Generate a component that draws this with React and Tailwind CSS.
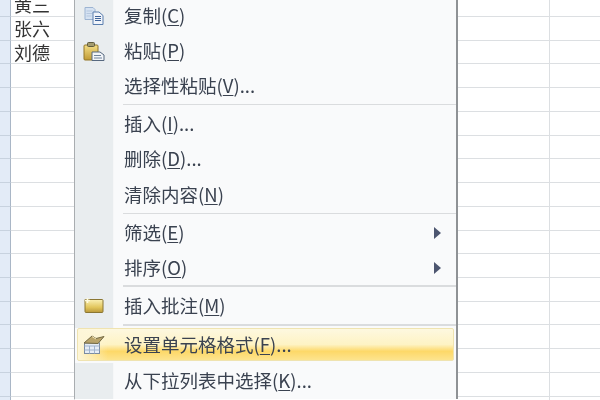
const font = { fontFamily: '"Noto Sans CJK SC", "Liberation Sans", sans-serif' };

function CopyIcon() {
  return (
    <svg width="20" height="18" viewBox="0 0 20 18">
      <path d="M1 .5h8l2 2v10H1z" fill="#d5e2f2" stroke="#9db4d2" />
      <path d="M2.500 4h6M2.500 6.500h6M2.500 9h5" stroke="#b5c7de" />
      <path d="M9 5h6l4 3.500v9H9z" fill="#f0f4fa" stroke="#5a7eae" />
      <path d="M11 9.500h6M11 11.500h6M11 13.500h6" stroke="#3f6399" strokeWidth="1.2" />
    </svg>
  );
}

function PasteIcon() {
  return (
    <svg width="22" height="19" viewBox="0 0 22 19">
      <defs>
        <linearGradient id="board" x1="0" y1="0" x2="0" y2="1">
          <stop offset="0" stopColor="#f5e088" />
          <stop offset="1" stopColor="#c09a34" />
        </linearGradient>
      </defs>
      <rect x="1" y="3" width="14" height="15" rx="1" fill="url(#board)" stroke="#937628" />
      <rect x="4.500" y=".5" width="7" height="4" rx="1" fill="#a39c70" stroke="#5f5a3c" />
      <path d="M9 10h8l4 3v5.500H9z" fill="#f2f5f9" stroke="#56687f" />
      <path d="M11 13.500h7M11 16h8" stroke="#71849c" />
    </svg>
  );
}

function NoteIcon() {
  return (
    <svg width="20" height="16" viewBox="0 0 20 16">
      <defs>
        <linearGradient id="note" x1="0" y1="0" x2="0" y2="1">
          <stop offset="0" stopColor="#faf0b4" />
          <stop offset="0.6" stopColor="#e2c65c" />
          <stop offset="1" stopColor="#b9983a" />
        </linearGradient>
      </defs>
      <path d="M1 1.500h17a1 1 0 0 1 1 1v11a1 1 0 0 1-1 1H2a1 1 0 0 1-1-1z" fill="url(#note)" stroke="#8a7632" />
      <path d="M3.500 0v5M1 2.500h5" stroke="#fffbdc" strokeWidth="1.6" />
    </svg>
  );
}

function FormatIcon() {
  return (
    <svg width="22" height="19" viewBox="0 0 22 19">
      <rect x="1.500" y="8" width="15" height="10.500" fill="#e6edf6" stroke="#7b8ca2" />
      <path d="M1.500 11h15M6.500 11v7.500M11.500 11v7.500M1.500 15h15" stroke="#9fb3cc" />
      <path d="M1 8l8-7 4 2.500 8-2-6 7z" fill="#b9a46a" stroke="#746a44" />
      <path d="M9 1.500l4 2.500" stroke="#f3e7b8" />
    </svg>
  );
}

const menu = [
  { label: "复制", key: "C", icon: <CopyIcon />, h: "h-[35px]" },
  { label: "粘贴", key: "P", icon: <PasteIcon />, h: "h-[35px]" },
  { label: "选择性粘贴", key: "V", dots: true, h: "h-[35px]" },
  { sep: true, h: "h-[2.5px]" },
  { label: "插入", key: "I", dots: true, h: "h-[35.5px]" },
  { label: "删除", key: "D", dots: true, h: "h-[35.5px]" },
  { label: "清除内容", key: "N", h: "h-[35.5px]" },
  { sep: true, h: "h-[2.5px]" },
  { label: "筛选", key: "E", arrow: true, h: "h-[35px]" },
  { label: "排序", key: "O", arrow: true, h: "h-[35px]" },
  { sep: true, h: "h-[3.5px]" },
  { label: "插入批注", key: "M", icon: <NoteIcon />, h: "h-[35.5px]" },
  { sep: true, h: "h-[3.5px]" },
  { label: "设置单元格格式", key: "F", dots: true, icon: <FormatIcon />, active: true },
  { label: "从下拉列表中选择", key: "K", dots: true, h: "h-[35.5px]" },
];

const names = ["黄三", "张六", "刘德"];

function Sheet() {
  return (
    <div className="-mt-[6.7px]">
      {Array.from({ length: 18 }).map((_, i) => (
        <div key={i} className="flex h-[23.72px]">
          <div className="w-[11px] shrink-0 bg-[#e3ebf7] border-r border-b border-r-[#a9b6c6] border-b-[#c8d2df]" />
          <div className="w-[64px] shrink-0 bg-white border-r border-b border-[#dcdfe2] text-[18px] leading-[23px] pl-[3px] text-[#333]">
            {names[i]}
          </div>
          <div className="w-[475px] shrink-0 bg-white border-r border-b border-[#dcdfe2]" />
          <div className="flex-1 bg-white border-b border-[#dcdfe2]" />
        </div>
      ))}
    </div>
  );
}

function MenuRow({ item }) {
  if (item.sep) {
    return (
      <div className={`flex ${item.h}`}>
        <div className="w-[39px] shrink-0 bg-[#e9edef] border-r border-[#f6f7f8]" />
        <div className="ml-[9px] flex-1 h-[1.5px] bg-[#dadcde]" />
      </div>
    );
  }
  const inner = (
    <>
      <div className="w-[26px] h-full shrink-0 flex items-center justify-center">{item.icon}</div>
      <span className="ml-[17px] text-[18.5px] text-[#3a4250] whitespace-nowrap">
        {item.label}(<span className="underline underline-offset-2">{item.key}</span>){item.dots ? "..." : ""}
      </span>
    </>
  );
  if (item.active) {
    return (
      <div className="flex h-[35.5px]">
        <div className="flex items-center w-full mt-[0.5px] mb-[2px] ml-[2px] mr-[2px] pl-[3px] rounded-[2px] border border-[#efe3b0] bg-[linear-gradient(90deg,#fdf6d8,transparent_8%),linear-gradient(#fdf8e0_0%,#fef3c4_50%,#fdd868_72%,#fde48e_100%)]">
          {inner}
        </div>
      </div>
    );
  }
  return (
    <div className={`relative flex items-center ${item.h}`}>
      <div className="absolute left-0 top-0 bottom-0 w-[39px] bg-[#e9edef] border-r border-[#f6f7f8]" />
      <div className="relative flex items-center h-full pl-[6px]">{inner}</div>
      {item.arrow && (
        <svg className="absolute right-[15px] top-1/2 -translate-y-1/2" width="7" height="12" viewBox="0 0 7 12">
          <path d="M0 0l7 6-7 6z" fill="#4d5670" />
        </svg>
      )}
    </div>
  );
}

export default function App() {
  return (
    <div className="relative w-[600px] h-[400px] overflow-hidden bg-white blur-[0.5px]" style={font}>
      <Sheet />
      <div className="absolute left-[74px] top-[-1.5px] w-[384px] bg-[#f9fafb] border-l border-r-2 border-l-[#a9adb0] border-r-[#8f9295]">
        {menu.map((item, i) => (
          <MenuRow key={i} item={item} />
        ))}
      </div>
    </div>
  );
}
